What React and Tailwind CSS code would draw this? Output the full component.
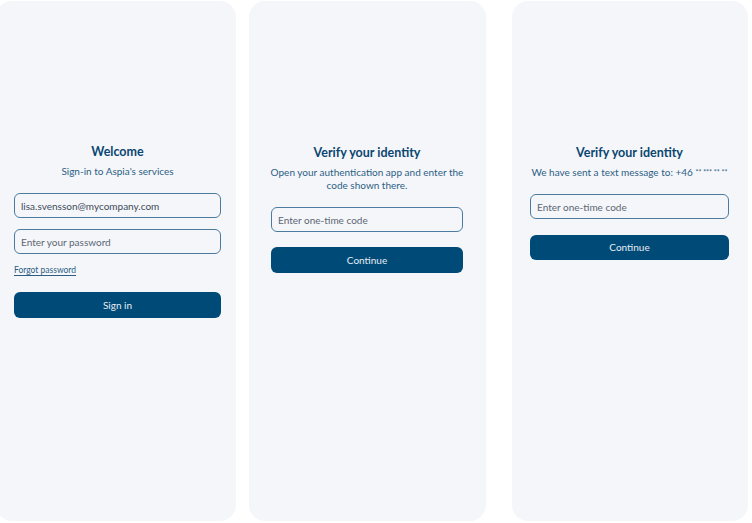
export default function App() {
  return (
    <div
      className="w-[752px] h-[523px] bg-white flex items-start pt-px overflow-hidden"
      style={{ fontFamily: "Lato, 'Noto Sans', sans-serif" }}
    >
      {/* Sign in */}
      <div className="-ml-[4px] w-[240px] h-[520px] shrink-0 rounded-2xl bg-[#f5f6fa] pt-[143px] pl-[18px] pr-[15px] flex flex-col">
        <h2 className="text-center text-[12.5px] leading-[16px] font-bold text-[#0a4770]">Welcome</h2>
        <p className="mt-[5px] text-center text-[10px] leading-[13px] text-[#2c5e84]">Sign-in to Aspia's services</p>
        <input
          className="mt-[15px] h-[25px] rounded-md border border-[#4b7c9f] bg-transparent px-[6px] text-[10px] text-[#3d4b58] outline-none"
          defaultValue="lisa.svensson@mycompany.com"
        />
        <input
          className="mt-[11px] h-[25px] rounded-md border border-[#4b7c9f] bg-transparent px-[6px] text-[10px] text-[#3d4b58] placeholder:text-[#5b6672] outline-none"
          placeholder="Enter your password"
          type="password"
        />
        <a href="#" className="mt-[11px] self-start text-[8.5px] leading-[10px] text-[#2c5e84] underline underline-offset-2">
          Forgot password
        </a>
        <button className="mt-[17px] h-[26px] rounded-md bg-[#004a77] text-[10px] text-[#e6edf3]">Sign in</button>
      </div>

      {/* Authenticator app */}
      <div className="ml-[13px] w-[237px] h-[520px] shrink-0 rounded-2xl bg-[#f5f6fa] pt-[144px] pl-[22px] pr-[23px] flex flex-col">
        <h2 className="text-center text-[12.5px] leading-[16px] font-bold text-[#0a4770]">Verify your identity</h2>
        <p className="mt-[5px] -mx-[4px] text-center text-[10px] leading-[13px] text-[#2c5e84]">
          Open your authentication app and enter the code shown there.
        </p>
        <input
          className="mt-[15px] h-[25px] rounded-md border border-[#4b7c9f] bg-transparent px-[6px] text-[10px] placeholder:text-[#5b6672] outline-none"
          placeholder="Enter one-time code"
        />
        <button className="mt-[15px] h-[26px] rounded-md bg-[#004a77] text-[10px] text-[#e6edf3]">Continue</button>
      </div>

      {/* Text message */}
      <div className="ml-[26px] w-[236px] h-[520px] shrink-0 rounded-2xl bg-[#f5f6fa] pt-[144px] pl-[18px] pr-[19px] flex flex-col">
        <h2 className="text-center text-[12.5px] leading-[16px] font-bold text-[#0a4770]">Verify your identity</h2>
        <p className="mt-[5px] text-center text-[10px] leading-[13px] text-[#2c5e84] whitespace-nowrap">
          We have sent a text message to: +46 <span className="text-[7px] align-top">** *** ** **</span>
        </p>
        <input
          className="mt-[15px] h-[25px] rounded-md border border-[#4b7c9f] bg-transparent px-[6px] text-[10px] placeholder:text-[#5b6672] outline-none"
          placeholder="Enter one-time code"
        />
        <button className="mt-[16px] h-[25px] rounded-md bg-[#004a77] text-[10px] text-[#e6edf3]">Continue</button>
      </div>
    </div>
  );
}
